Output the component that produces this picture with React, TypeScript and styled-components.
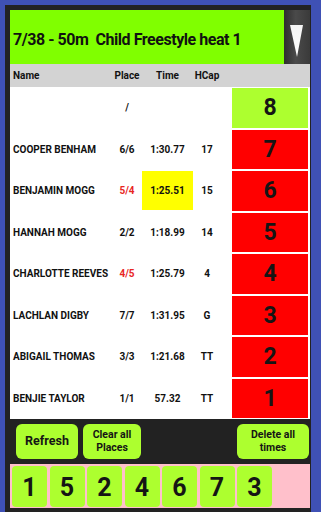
import React from "react";
import styled, { createGlobalStyle } from "styled-components";

const Global = createGlobalStyle`
  html, body { margin: 0; padding: 0; background: #3f51b5; }
  body { font-family: Roboto, "Noto Sans", Arial, sans-serif; }
  * { box-sizing: border-box; }
`;

const Panel = styled.div`
  margin: 5px 10px 0 5px;
  width: 306px;
  height: 507px;
  background: #222;
  padding: 5px 1px 0 5px;
  display: flex;
  flex-direction: column;
`;

const TitleBar = styled.div`
  display: flex;
  height: 54px;
`;

const Title = styled.div`
  flex: 1;
  min-width: 0;
  background: #80ff00;
  color: #111;
  font-weight: 700;
  font-size: 16px;
  letter-spacing: -0.45px;
  display: flex;
  align-items: center;
  padding: 4px 0 0 3px;
  white-space: pre;
  overflow: hidden;
`;

const ArrowButton = styled.div`
  flex: 0 0 26px;
  background: linear-gradient(90deg, #2e2e2e 0%, #4a4a4a 45%, #3a3a3a 100%);
  display: flex;
  align-items: flex-start;
  justify-content: center;
  padding-top: 15px;
`;

const Grid = styled.div`
  display: grid;
  grid-template-columns: 102px 30px 51px 28px 89px;
  align-items: center;
`;

const HeadRow = styled(Grid)`
  height: 23px;
  background: #d3d3d3;
  color: #111;
  font-size: 10px;
  font-weight: 700;
`;

const Body = styled.div`
  background: #fff;
  display: flex;
  flex-direction: column;
  height: 332px;
`;

const Row = styled(Grid)`
  height: 41.5px;
  color: #111;
  font-size: 10px;
  font-weight: 700;
`;

const NameCell = styled.div`
  padding-left: 3px;
  white-space: nowrap;
`;

const Cell = styled.div<{ $red?: boolean; $hl?: boolean }>`
  text-align: center;
  color: ${(p) => (p.$red ? "#e8261f" : "#111")};
  background: ${(p) => (p.$hl ? "#ffff00" : "transparent")};
  height: ${(p) => (p.$hl ? "39px" : "auto")};
  display: flex;
  align-items: center;
  justify-content: center;
  white-space: nowrap;
`;

const PlaceTile = styled.div<{ $green?: boolean }>`
  margin: 0 2px 0 11px;
  height: 39.5px;
  background: ${(p) => (p.$green ? "#adff2f" : "#ff0000")};
  display: flex;
  align-items: center;
  justify-content: center;
  font-size: 23px;
  font-weight: 700;
  color: #151515;
`;

const ButtonBar = styled.div`
  height: 45px;
  display: flex;
  align-items: center;
  gap: 5px;
  padding: 0 1px 0 6px;
`;

const Btn = styled.div<{ $w: number; $big?: boolean }>`
  width: ${(p) => p.$w}px;
  height: 35px;
  background: #adff2f;
  border-radius: 6px;
  display: flex;
  align-items: center;
  justify-content: center;
  text-align: center;
  color: #151515;
  font-weight: 700;
  font-size: ${(p) => (p.$big ? "12.5px" : "10.5px")};
  line-height: 12.5px;
`;

const Spacer = styled.div`
  flex: 1;
`;

const Strip = styled.div`
  height: 44px;
  background: #ffc0cb;
  display: flex;
  align-items: center;
  gap: 2.5px;
  padding-left: 2px;
`;

const NumTile = styled.div`
  width: 35px;
  height: 41px;
  background: #adff2f;
  border-radius: 4px;
  display: flex;
  align-items: center;
  justify-content: center;
  padding-top: 3px;
  font-size: 25px;
  font-weight: 700;
  color: #151515;
`;

type R = { name: string; place: string; time: string; hcap: string; red?: boolean; hl?: boolean };

const rows: R[] = [
  { name: "", place: "/", time: "", hcap: "" },
  { name: "COOPER BENHAM", place: "6/6", time: "1:30.77", hcap: "17" },
  { name: "BENJAMIN MOGG", place: "5/4", time: "1:25.51", hcap: "15", red: true, hl: true },
  { name: "HANNAH MOGG", place: "2/2", time: "1:18.99", hcap: "14" },
  { name: "CHARLOTTE REEVES", place: "4/5", time: "1:25.79", hcap: "4", red: true },
  { name: "LACHLAN DIGBY", place: "7/7", time: "1:31.95", hcap: "G" },
  { name: "ABIGAIL THOMAS", place: "3/3", time: "1:21.68", hcap: "TT" },
  { name: "BENJIE TAYLOR", place: "1/1", time: "57.32", hcap: "TT" },
];

export default function App() {
  return (
    <>
      <Global />
      <Panel>
        <TitleBar>
          <Title>{"7/38 - 50m  Child Freestyle heat 1"}</Title>
          <ArrowButton>
            <svg width="14" height="33" viewBox="0 0 14 33">
              <defs>
                <linearGradient id="sp" x1="0" y1="0" x2="0" y2="1">
                  <stop offset="0" stopColor="#f4f4f4" />
                  <stop offset="1" stopColor="#ffffff" />
                </linearGradient>
              </defs>
              <polygon points="0,0 13,0 7,32" fill="url(#sp)" />
            </svg>
          </ArrowButton>
        </TitleBar>
        <HeadRow>
          <NameCell>Name</NameCell>
          <Cell>Place</Cell>
          <Cell>Time</Cell>
          <Cell>HCap</Cell>
          <div />
        </HeadRow>
        <Body>
          {rows.map((r, i) => (
            <Row key={i}>
              <NameCell>{r.name}</NameCell>
              <Cell $red={r.red}>{r.place}</Cell>
              <Cell $hl={r.hl}>{r.time}</Cell>
              <Cell>{r.hcap}</Cell>
              <PlaceTile $green={i === 0}>{8 - i}</PlaceTile>
            </Row>
          ))}
        </Body>
        <ButtonBar>
          <Btn $w={62} $big>Refresh</Btn>
          <Btn $w={58}>Clear all<br />Places</Btn>
          <Spacer />
          <Btn $w={72}>Delete all<br />times</Btn>
        </ButtonBar>
        <Strip>
          {[1, 5, 2, 4, 6, 7, 3].map((n) => (
            <NumTile key={n}>{n}</NumTile>
          ))}
        </Strip>
      </Panel>
    </>
  );
}
